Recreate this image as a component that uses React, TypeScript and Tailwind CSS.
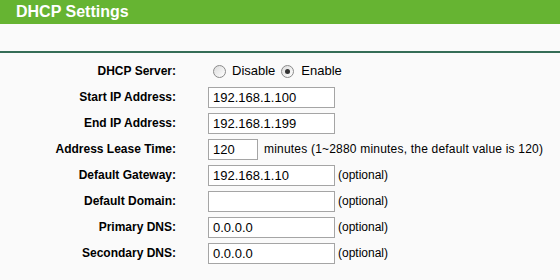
const rows = [
  { label: 'Start IP Address:', value: '192.168.1.100' },
  { label: 'End IP Address:', value: '192.168.1.199' },
  { label: 'Address Lease Time:', value: '120', short: true, note: 'minutes (1~2880 minutes, the default value is 120)' },
  { label: 'Default Gateway:', value: '192.168.1.10', note: '(optional)' },
  { label: 'Default Domain:', value: '', note: '(optional)' },
  { label: 'Primary DNS:', value: '0.0.0.0', note: '(optional)' },
  { label: 'Secondary DNS:', value: '0.0.0.0', note: '(optional)' },
]

function Radio({ checked }: { checked?: boolean }) {
  return (
    <span className="w-[13px] h-[13px] rounded-full border border-[#8a8a8a] bg-gradient-to-br from-[#dcdcdc] to-white flex items-center justify-center">
      {checked && <span className="w-[5px] h-[5px] rounded-full bg-[#333]" />}
    </span>
  )
}

export default function App() {
  return (
    <main className="w-[560px] h-[280px] bg-[#fafafa] font-['Liberation_Sans',Arial,sans-serif] text-black overflow-hidden">
      <header className="h-6 bg-[#66b432] text-white font-bold text-base leading-6 pl-4">
        DHCP Settings
      </header>
      <div className="h-[27px]" />
      <div className="h-[2px] bg-[#356d57]" />
      <div className="pt-[5px]">
        <div className="flex items-center h-[26px]">
          <span className="w-[176px] text-right font-bold text-xs">DHCP Server:</span>
          <div className="ml-[37px] flex items-center text-[13px]">
            <Radio />
            <span className="ml-[6px]">Disable</span>
            <span className="ml-[6px]"><Radio checked /></span>
            <span className="ml-[7px]">Enable</span>
          </div>
        </div>
        {rows.map((r) => (
          <div key={r.label} className="flex items-center h-[26px]">
            <span className="w-[176px] text-right font-bold text-xs">{r.label}</span>
            <div
              className={`ml-[32px] h-[21px] border border-[#a5a5a5] bg-white text-[13px] leading-[19px] px-1 ${
                r.short ? 'w-[50px]' : 'w-[127px]'
              }`}
            >
              {r.value}
            </div>
            {r.note && (
              <span className={`text-xs ${r.short ? 'ml-[6px] tracking-[0.2px]' : 'ml-[3px]'}`}>{r.note}</span>
            )}
          </div>
        ))}
      </div>
    </main>
  )
}
